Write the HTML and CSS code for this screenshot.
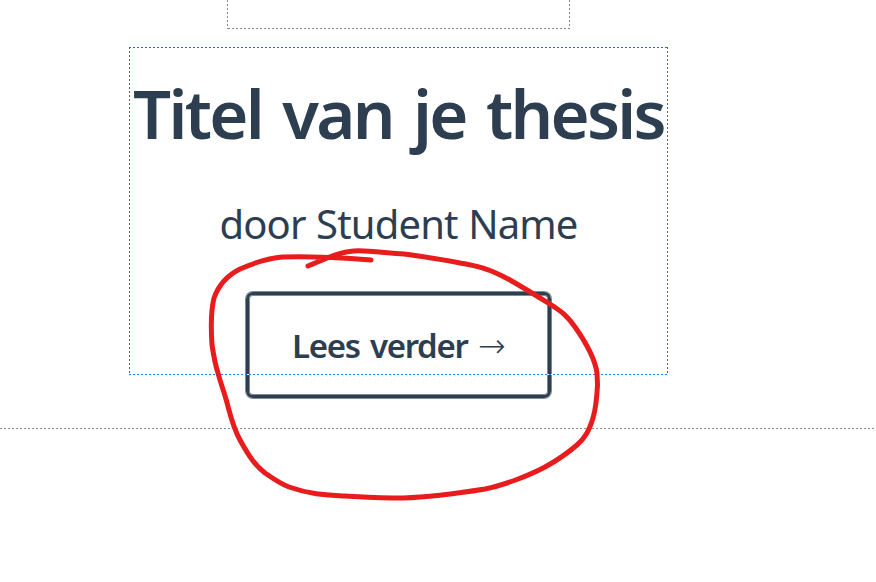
FILE: index.html
```html
<!DOCTYPE html>
<html lang="nl">
<head>
<meta charset="utf-8">
<title>Titel van je thesis</title>
<link rel="stylesheet" href="styles.css">
</head>
<body>
<main class="cover">
  <div class="guide guide-top"></div>
  <section class="guide guide-title">
    <h1 class="title">Titel van je thesis</h1>
    <p class="author">door Student Name</p>
    <a class="more"><span class="label">Lees verder</span><span class="arrow">→</span></a>
    <i class="edge"></i>
  </section>
</main>
<svg class="pen" viewBox="0 0 876 582" fill="none" stroke="#e81c1c" stroke-width="5" stroke-linecap="round" stroke-linejoin="round">
  <path d="M371 260C345 258 310 256 283 257C270 258 258 261 240 269C228 275 219 284 214 298C211 310 211 330 212 345C214 358 215 364 218 373C220 381 224 392 226 399C230 413 232 425 240 440C250 458 255 465 265 473C275 480 281 484 289 487C312 495 328 495 345 496C365 497 380 498 403 498C433 497 460 493 485 489C505 485 530 475 545 467C556 461 570 451 577 445C585 438 589 431 593 418C596 408 597 395 597.500 385L597 373C595 359 587 344 575 327C566 314 560 311 553 306C537 296 524 288 510 280C488 268 477 266 460 263C440 259 418 256 404 254C386 253 366 250 354 251C338 252 323 260 308 266"/>
</svg>
</body>
</html>
```
FILE: styles.css
```css
* { box-sizing: border-box; }

body {
  margin: 0;
  background: #fff;
  color: #2c3e50;
  font-family: "Noto Sans", "Open Sans", sans-serif;
}

.cover {
  --dash: #888;
  display: flex;
  flex-direction: column;
  height: 429px;
  background: repeating-linear-gradient(90deg, var(--dash) 0 2px, transparent 2px 4px) 0 100% / 100% 1px no-repeat;
}

.guide {
  background:
    repeating-linear-gradient(90deg, var(--dash) 0 2px, transparent 2px 4px) 1px 100% / 100% 1px no-repeat,
    repeating-linear-gradient(180deg, var(--dash) 0 2px, transparent 2px 4px) 0 0 / 1px 100% no-repeat,
    repeating-linear-gradient(180deg, var(--dash) 0 2px, transparent 2px 4px) 100% 0 / 1px 100% no-repeat,
    var(--top, none) 0 0 / 100% 1px no-repeat;
}

.guide-top {
  width: 343px;
  height: 29px;
  margin-left: 227px;
}

.guide-title {
  --dash: #1a6fd8;
  --top: repeating-linear-gradient(90deg, #1a6fd8 0 2px, transparent 2px 4px);
  position: relative;
  display: flex;
  flex-direction: column;
  align-items: center;
  width: 539px;
  height: 328px;
  margin: 18px 0 0 129px;
}

.title {
  margin: 20px 0 0;
  font-size: 67px;
  font-weight: 600;
  line-height: 92px;
  letter-spacing: -2.7px;
  word-spacing: 5.5px;
  white-space: nowrap;
}

.author {
  margin: 37px 0 0;
  font-size: 40px;
  font-weight: 400;
  line-height: 56px;
  letter-spacing: -0.85px;
  word-spacing: 1px;
  white-space: nowrap;
}

.more {
  display: flex;
  flex: none;
  align-items: center;
  width: 305px;
  height: 106px;
  margin-top: 40px;
  padding: 0 0 0 43px;
  border: 3px solid #2c3e50;
  border-radius: 7px;
  box-shadow: 0 0 0 1px #7f8a95, inset 0 0 0 1px #7f8a95;
  font-size: 33px;
  font-weight: 600;
  white-space: nowrap;
}

.label {
  width: 176px;
  letter-spacing: -1.3px;
  word-spacing: 3px;
}

.arrow {
  margin-left: 10px;
  font-family: "DejaVu Sans", sans-serif;
  font-weight: 200;
}

.edge {
  position: absolute;
  right: 0;
  bottom: 0;
  left: 0;
  height: 1px;
  background: repeating-linear-gradient(90deg, #1a7fe8 0 2px, #fff 2px 4px);
}

.pen {
  position: absolute;
  inset: 0;
  width: 876px;
  height: 582px;
}
```
